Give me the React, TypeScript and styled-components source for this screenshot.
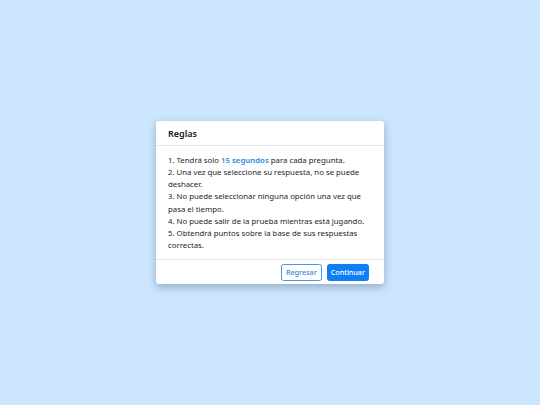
import styled, { createGlobalStyle } from "styled-components";

const Global = createGlobalStyle`
  html, body {
    margin: 0;
    padding: 0;
    height: 100%;
  }
  body {
    background: #cbe6fd;
    font-family: "Noto Sans", "DejaVu Sans", sans-serif;
    color: #1f2327;
  }
`;

const Page = styled.div`
  height: 100vh;
  display: flex;
  align-items: center;
  justify-content: center;
`;

const Card = styled.div`
  width: 228px;
  background: #fff;
  border-radius: 3px;
  box-shadow: 0 3px 8px rgba(40, 60, 90, 0.35);
`;

const Header = styled.div`
  height: 24px;
  padding: 0 12px;
  display: flex;
  align-items: center;
  border-bottom: 1px solid #e4e6e8;
`;

const Title = styled.h3`
  margin: 0;
  font-size: 9px;
  font-weight: 600;
  color: #15181b;
`;

const Body = styled.ol`
  margin: 0;
  padding: 8px 12px 8px;
  list-style: none;
  font-size: 7.8px;
`;

const Item = styled.li`
  margin: 0;
  line-height: 12.1px;
`;

const Highlight = styled.span`
  color: #1e88e5;
  font-weight: 600;
`;

const Footer = styled.div`
  border-top: 1px solid #e4e6e8;
  padding: 4px 15px 3px;
  display: flex;
  justify-content: flex-end;
  gap: 5px;
`;

const Button = styled.button<{ $primary?: boolean }>`
  height: 17px;
  padding: 0 ${(p) => (p.$primary ? "3px" : "4px")};
  font-family: inherit;
  font-size: 7.2px;
  font-weight: 500;
  border-radius: 2.5px;
  border: 1px solid ${(p) => (p.$primary ? "#0d7ff5" : "#4a94e8")};
  background: ${(p) => (p.$primary ? "#0d7ff5" : "#fff")};
  color: ${(p) => (p.$primary ? "#fff" : "#3a86e0")};
`;

export default function App() {
  return (
    <>
      <Global />
      <Page>
        <Card>
          <Header>
            <Title>Reglas</Title>
          </Header>
          <Body>
            <Item>
              1. Tendrá solo <Highlight>15 segundos</Highlight> para cada pregunta.
            </Item>
            <Item>2. Una vez que seleccione su respuesta, no se puede deshacer.</Item>
            <Item>3. No puede seleccionar ninguna opción una vez que pasa el tiempo.</Item>
            <Item>4. No puede salir de la prueba mientras está jugando.</Item>
            <Item>5. Obtendrá puntos sobre la base de sus respuestas correctas.</Item>
          </Body>
          <Footer>
            <Button>Regresar</Button>
            <Button $primary>Continuar</Button>
          </Footer>
        </Card>
      </Page>
    </>
  );
}
